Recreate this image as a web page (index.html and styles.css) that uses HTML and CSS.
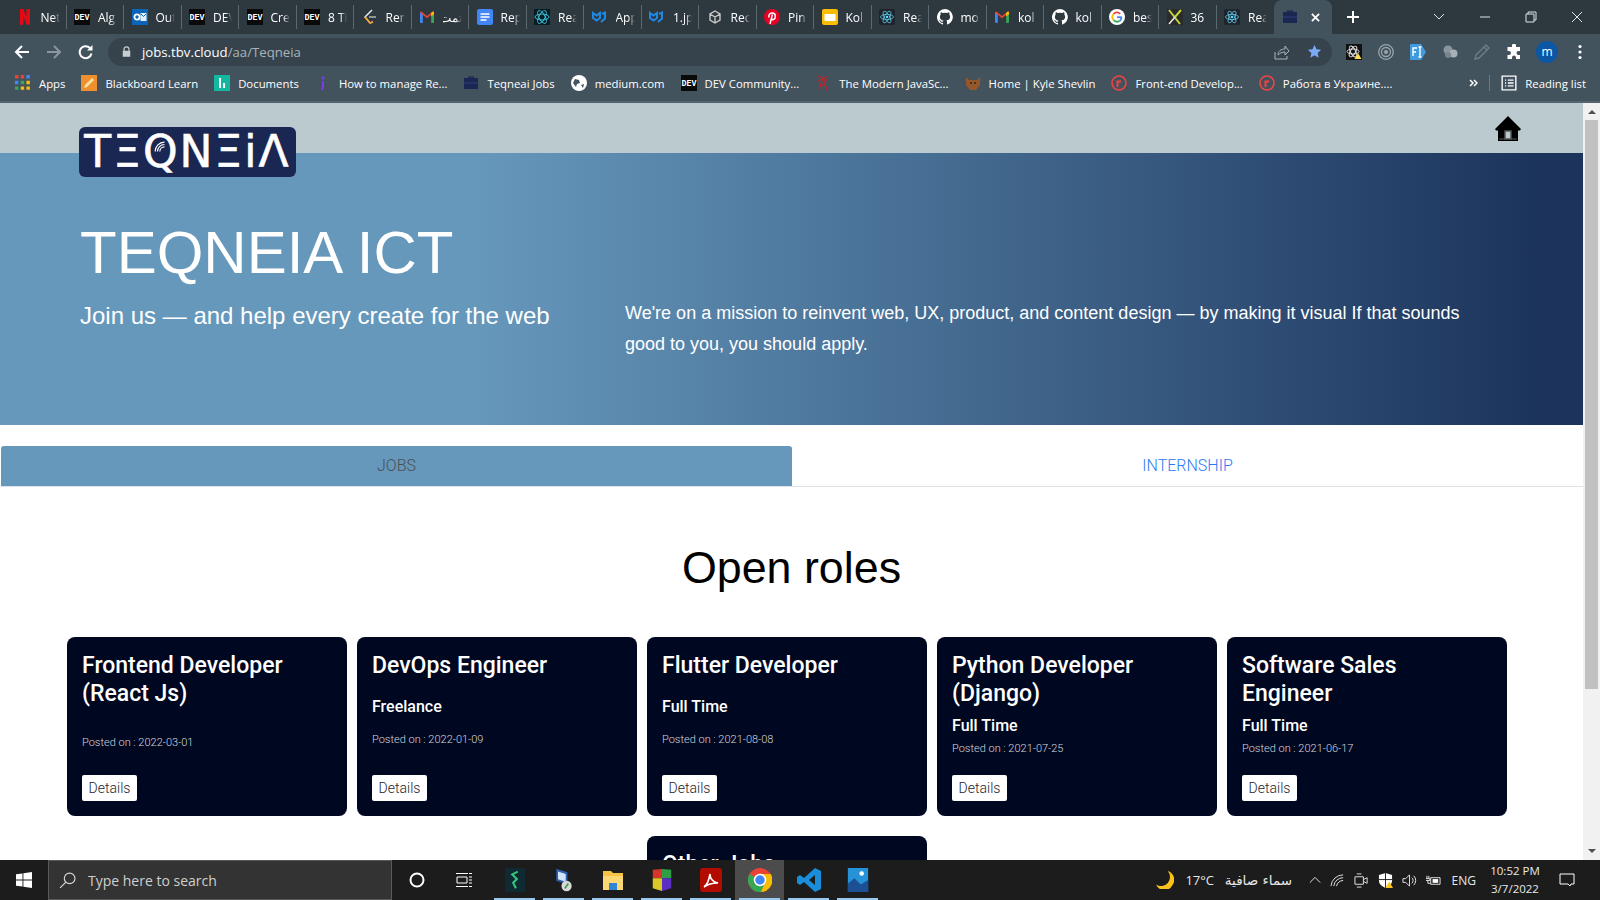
FILE: index.html
```html
<!DOCTYPE html>
<html lang="en">

<head>
    <meta charset="UTF-8">
    <meta name="viewport" content="width=device-width, initial-scale=1.0">
    <title>Teqneia Jobs</title>
    <link rel="stylesheet" href="styles.css">
</head>

<body>
    <!-- icons used more than once -->
    <svg class="sprite" xmlns="http://www.w3.org/2000/svg">
        <symbol id="i-netflix" viewBox="0 0 16 16">
            <path fill="#e50914" d="M3 0h3.400l3 8V0H13v16l-3.400-.5L6.400 7.500V15.500L3 16z" />
        </symbol>
        <symbol id="i-dev" viewBox="0 0 16 16">
            <rect width="16" height="16" fill="#0a0a0a" />
            <text x="8" y="11" text-anchor="middle" class="dev-text">DEV</text>
        </symbol>
        <symbol id="i-outlook" viewBox="0 0 16 16">
            <rect width="16" height="16" fill="#0a64b8" />
            <rect x="8.500" y="4" width="6" height="8" fill="#e6f0fa" />
            <path d="M9 5l2.500 2.500L14 5" fill="none" stroke="#0a64b8" />
            <circle cx="5" cy="8" r="2.600" fill="none" stroke="#fff" stroke-width="1.800" />
        </symbol>
        <symbol id="i-leet" viewBox="0 0 16 16">
            <path d="M10 1L3 8l5 6 3-1" fill="none" stroke="#e8e8e8" stroke-width="1.500" />
            <path d="M3 8l5 6 3-1" fill="none" stroke="#f89f1b" stroke-width="1.500" />
            <path d="M7 8h7" stroke="#b3b3b3" stroke-width="1.500" />
        </symbol>
        <symbol id="i-gmail" viewBox="0 0 16 16">
            <path fill="#4285f4" d="M1 3.500h2.800V14H2a1 1 0 0 1-1-1z" />
            <path fill="#34a853" d="M12.200 3.500H15V13a1 1 0 0 1-1 1h-1.800z" />
            <path fill="#ea4335" d="M1 3.500l1-1.300L8 7l6-4.800 1 1.300-7 5.800z" />
            <path fill="#fbbc04" d="M12.200 4l2-1.800L15 3.500v1.700l-2.800 2.300z" />
        </symbol>
        <symbol id="i-docs" viewBox="0 0 16 16">
            <rect width="16" height="16" rx="2" fill="#4285f4" />
            <path d="M3.500 5h9M3.500 8h9M3.500 11h6" stroke="#fff" stroke-width="1.500" />
        </symbol>
        <symbol id="i-rb" viewBox="0 0 16 16">
            <rect width="16" height="16" fill="#061d24" />
            <g fill="none" stroke="#41c9e2" stroke-width=".9">
                <ellipse cx="8" cy="8" rx="7" ry="3" />
                <ellipse cx="8" cy="8" rx="7" ry="3" transform="rotate(60 8 8)" />
                <ellipse cx="8" cy="8" rx="7" ry="3" transform="rotate(120 8 8)" />
            </g>
        </symbol>
        <symbol id="i-mui" viewBox="0 0 16 16">
            <path d="M1 4l3.500 2.500L8 4v5l-3.500 2.500L1 9zM10 5l3-1.500v6L9 13" fill="none" stroke="#1e88e5"
                stroke-width="2" />
        </symbol>
        <symbol id="i-box" viewBox="0 0 16 16">
            <path d="M8 2l5 3v6l-5 3-5-3V5zM3 5l5 3 5-3M8 8v6" fill="none" stroke="#c9c9c9" stroke-width="1.400" />
        </symbol>
        <symbol id="i-pin" viewBox="0 0 16 16">
            <circle cx="8" cy="8" r="8" fill="#e60023" />
            <path d="M6 15l2.400-9.500M5 8.500C4 5.500 6.500 3.500 9 4c3 .6 3 5.500.5 6.500-1.200.4-2-.5-2-.5" fill="none"
                stroke="#fff" stroke-width="1.500" />
        </symbol>
        <symbol id="i-slides" viewBox="0 0 16 16">
            <rect width="16" height="16" rx="2" fill="#fbbc04" />
            <rect x="2.500" y="5" width="11" height="7" fill="#fff" />
        </symbol>
        <symbol id="i-react" viewBox="0 0 16 16">
            <rect width="16" height="16" rx="2" fill="#20232a" />
            <circle cx="8" cy="8" r="1.300" fill="#61dafb" />
            <g fill="none" stroke="#61dafb" stroke-width=".7">
                <ellipse cx="8" cy="8" rx="6.500" ry="2.600" />
                <ellipse cx="8" cy="8" rx="6.500" ry="2.600" transform="rotate(60 8 8)" />
                <ellipse cx="8" cy="8" rx="6.500" ry="2.600" transform="rotate(120 8 8)" />
            </g>
        </symbol>
        <symbol id="i-github" viewBox="0 0 16 16">
            <path fill="#fff"
                d="M8 0a8 8 0 0 0-2.500 15.600c.4.100.5-.2.500-.4v-1.400c-2.200.5-2.700-1-2.700-1-.4-.9-.9-1.200-.9-1.200-.7-.5.100-.5.100-.5.800.100 1.200.8 1.200.8.700 1.200 1.900.9 2.300.7.100-.5.300-.9.500-1.100-1.800-.2-3.600-.9-3.600-4 0-.9.300-1.600.8-2.100-.1-.2-.4-1 .1-2.100 0 0 .7-.2 2.200.8a7.600 7.600 0 0 1 4 0c1.500-1 2.200-.8 2.200-.8.400 1.100.2 1.900.1 2.100.5.600.8 1.300.8 2.100 0 3.100-1.900 3.700-3.700 3.900.3.300.6.800.6 1.500v2.200c0 .2.100.5.600.4A8 8 0 0 0 8 0z" />
        </symbol>
        <symbol id="i-google" viewBox="0 0 16 16">
            <circle cx="8" cy="8" r="8" fill="#fff" />
            <path d="M12.800 8.200H8" fill="none" stroke="#4285f4" stroke-width="1.800" />
            <path d="M12.500 8.200a4.500 4.500 0 0 1-2 3.700" fill="none" stroke="#4285f4" stroke-width="1.800" />
            <path d="M10.500 11.900a4.500 4.500 0 0 1-5.900-.9" fill="none" stroke="#34a853" stroke-width="1.800" />
            <path d="M4.600 11a4.500 4.500 0 0 1 0-6" fill="none" stroke="#fbbc04" stroke-width="1.800" />
            <path d="M4.600 5a4.500 4.500 0 0 1 6.600-.2" fill="none" stroke="#ea4335" stroke-width="1.800" />
        </symbol>
        <symbol id="i-x" viewBox="0 0 16 16">
            <rect width="16" height="16" fill="#2b2b2b" />
            <path d="M2 1l11 14M14 1L8 8" stroke="#c3d63a" stroke-width="2" fill="none" />
            <path d="M8 8l-6 7" stroke="#eee" stroke-width="1.500" fill="none" />
        </symbol>
        <symbol id="i-case" viewBox="0 0 16 16">
            <path fill="#1b2753" d="M5 3V1.500h6V3h4v11H1V3zM6.200 2.700V3h3.600v-.3z" />
            <path d="M1 8h14" stroke="#2e3f78" />
        </symbol>
        <symbol id="i-ring" viewBox="0 0 16 16">
            <circle cx="8" cy="8" r="7" fill="none" stroke="#ef4444" stroke-width="1.600" />
            <path d="M6.500 12V6.500h3.500" fill="none" stroke="#ef4444" stroke-width="2" />
        </symbol>
    </svg>

    <div class="screen">
        <div class="tabstrip">
            <div class="tab"><svg class="fav"><use href="#i-netflix" /></svg><span class="tab-title">Net</span></div>
            <div class="tab"><svg class="fav"><use href="#i-dev" /></svg><span class="tab-title">Alg</span></div>
            <div class="tab"><svg class="fav"><use href="#i-outlook" /></svg><span class="tab-title">Out</span></div>
            <div class="tab"><svg class="fav"><use href="#i-dev" /></svg><span class="tab-title">DEV</span></div>
            <div class="tab"><svg class="fav"><use href="#i-dev" /></svg><span class="tab-title">Cre</span></div>
            <div class="tab"><svg class="fav"><use href="#i-dev" /></svg><span class="tab-title">8 Ti</span></div>
            <div class="tab"><svg class="fav"><use href="#i-leet" /></svg><span class="tab-title">Ren</span></div>
            <div class="tab"><svg class="fav"><use href="#i-gmail" /></svg><span class="tab-title" dir="rtl">تمت</span></div>
            <div class="tab"><svg class="fav"><use href="#i-docs" /></svg><span class="tab-title">Rep</span></div>
            <div class="tab"><svg class="fav"><use href="#i-rb" /></svg><span class="tab-title">Rea</span></div>
            <div class="tab"><svg class="fav"><use href="#i-mui" /></svg><span class="tab-title">App</span></div>
            <div class="tab"><svg class="fav"><use href="#i-mui" /></svg><span class="tab-title">1.jp</span></div>
            <div class="tab"><svg class="fav"><use href="#i-box" /></svg><span class="tab-title">Rec</span></div>
            <div class="tab"><svg class="fav"><use href="#i-pin" /></svg><span class="tab-title">Pin</span></div>
            <div class="tab"><svg class="fav"><use href="#i-slides" /></svg><span class="tab-title">Kol</span></div>
            <div class="tab"><svg class="fav"><use href="#i-react" /></svg><span class="tab-title">Rea</span></div>
            <div class="tab"><svg class="fav"><use href="#i-github" /></svg><span class="tab-title">mo</span></div>
            <div class="tab"><svg class="fav"><use href="#i-gmail" /></svg><span class="tab-title">kol</span></div>
            <div class="tab"><svg class="fav"><use href="#i-github" /></svg><span class="tab-title">kol</span></div>
            <div class="tab"><svg class="fav"><use href="#i-google" /></svg><span class="tab-title">bes</span></div>
            <div class="tab"><svg class="fav"><use href="#i-x" /></svg><span class="tab-title">36</span></div>
            <div class="tab tab-last"><svg class="fav"><use href="#i-react" /></svg><span class="tab-title">Rea</span></div>
            <div class="tab-active"><svg class="fav"><use href="#i-case" /></svg>
                <svg class="tab-close" viewBox="0 0 10 10"><path d="M1 1l8 8M9 1l-8 8" /></svg>
            </div>
            <svg class="new-tab" viewBox="0 0 12 12"><path d="M6 0v12M0 6h12" /></svg>
            <div class="win-controls">
                <svg class="win-btn" viewBox="0 0 46 30"><path d="M18 12l5 5 5-5" /></svg>
                <svg class="win-btn" viewBox="0 0 46 30"><path d="M18 15h10" /></svg>
                <svg class="win-btn" viewBox="0 0 46 30"><path d="M18 12h8v8h-8zM20 12v-2h8v8h-2" /></svg>
                <svg class="win-btn" viewBox="0 0 46 30"><path d="M18 10l10 10M28 10L18 20" /></svg>
            </div>
        </div>

        <div class="toolbar">
            <svg class="nav-btn" viewBox="0 0 16 16"><path d="M15 8H2M8 2L2 8l6 6" /></svg>
            <svg class="nav-btn nav-off" viewBox="0 0 16 16"><path d="M1 8h13M8 2l6 6-6 6" /></svg>
            <svg class="nav-btn" viewBox="0 0 16 16"><path d="M13.500 9.500A6 6 0 1 1 12 4" /><path class="nav-fill" d="M14.500 1v5.500H9z" /></svg>
            <div class="omnibox">
                <svg class="lock" viewBox="0 0 12 14"><path d="M2 6V4a4 4 0 0 1 8 0v2h1v8H1V6zm1.500 0h5V4a2.500 2.500 0 0 0-5 0z" /></svg>
                <span class="url">jobs.tbv.cloud<span class="url-path">/aa/Teqneia</span></span>
                <svg class="share" viewBox="0 0 16 16"><path d="M1 8v7h12v-3M4 11c0-4 3-6 7-6V2l4 5-4 4V8c-3 0-5 1-7 3z" /></svg>
                <svg class="star" viewBox="0 0 16 16"><path d="M8 1l2.100 4.700 5 .5-3.800 3.400 1.100 5L8 11.900l-4.400 2.700 1.100-5L.9 6.200l5-.5z" /></svg>
            </div>
            <div class="extensions">
                <svg class="ext" viewBox="0 0 16 16"><rect width="16" height="16" fill="#111" /><g fill="none" stroke="#eee" stroke-width=".9"><ellipse cx="7" cy="7.500" rx="6" ry="2.500" /><ellipse cx="7" cy="7.500" rx="6" ry="2.500" transform="rotate(60 7 7.500)" /><ellipse cx="7" cy="7.500" rx="6" ry="2.500" transform="rotate(120 7 7.500)" /></g><path d="M12 9l3.500 6h-7z" fill="#fde047" /></svg>
                <svg class="ext" viewBox="0 0 16 16"><g fill="none" stroke="#9aa5ab"><circle cx="8" cy="8" r="7.300" stroke-width="1.300" /><circle cx="8" cy="8" r="4.500" stroke-width="1.300" /></g><circle cx="8" cy="8" r="2" fill="#9aa5ab" /></svg>
                <svg class="ext" viewBox="0 0 16 16"><path d="M1 0h10l5 8-5 8H1a1 1 0 0 1-1-1V1a1 1 0 0 1 1-1z" fill="#3f9ce0" /><path d="M3 12V4h4M3 8h3M10 3v10M8.500 3h3M8.500 13h3" stroke="#fff" stroke-width="1.400" fill="none" /></svg>
                <svg class="ext" viewBox="0 0 16 16"><circle cx="6" cy="6" r="4.500" fill="#8b979e" /><circle cx="11.500" cy="9.500" r="4" fill="#a7b0b6" /><circle cx="6" cy="11" r="3" fill="#79858c" /></svg>
                <svg class="ext" viewBox="0 0 16 16"><path d="M12 1l3 3L5 14l-4 1 1-4z" fill="none" stroke="#6f7c84" stroke-width="1.400" /><path d="M10 3l3 3" stroke="#6f7c84" stroke-width="1.400" /></svg>
                <svg class="ext" viewBox="0 0 16 16"><path fill="#fff" d="M6 1.500a2 2 0 0 1 4 0V3h4v4h-1.500a2 2 0 0 0 0 4H14v4H10v-1.500a2 2 0 0 0-4 0V15H1.500v-4H3a2 2 0 0 0 0-4H1.500V3H6z" /></svg>
                <span class="avatar">m</span>
                <svg class="kebab" viewBox="0 0 4 16"><circle cx="2" cy="2.500" r="1.600" /><circle cx="2" cy="8" r="1.600" /><circle cx="2" cy="13.500" r="1.600" /></svg>
            </div>
        </div>

        <div class="bookmarks">
            <div class="bm"><svg class="bm-icon" viewBox="0 0 14 14"><path fill="#ea4335" d="M0 0h3v3H0zM5 0h3v3H5z" /><path fill="#4285f4" d="M10 0h3v3h-3zM0 5h3v3H0z" /><path fill="#34a853" d="M5 5h3v3H5zM0 10h3v3H0z" /><path fill="#fbbc04" d="M10 5h3v3h-3zM5 10h3v3H5zM10 10h3v3h-3z" /></svg>Apps</div>
            <div class="bm"><svg class="bm-icon" viewBox="0 0 16 16"><rect width="16" height="16" fill="#ef8f2e" /><path d="M3 13l1-3 7-7 2 2-7 7z" fill="#f7e3a1" /></svg>Blackboard Learn</div>
            <div class="bm"><svg class="bm-icon" viewBox="0 0 16 16"><rect width="16" height="16" fill="#12b8a0" /><path d="M5 3h2v10H5zM9 8h2v5H9z" fill="#fff" /></svg>Documents</div>
            <div class="bm"><svg class="bm-icon" viewBox="0 0 16 16"><circle cx="8" cy="3" r="1.500" fill="#7c3aed" /><path d="M8 6v6l-1 3" stroke="#7c3aed" stroke-width="2" fill="none" /></svg>How to manage Re...</div>
            <div class="bm"><svg class="bm-icon"><use href="#i-case" /></svg>Teqneai Jobs</div>
            <div class="bm"><svg class="bm-icon" viewBox="0 0 16 16"><circle cx="8" cy="8" r="8" fill="#fff" /><path d="M4 4l4 1 1 3-3 1-1 3-3-4zM10 10l3-1-1 4z" fill="#44545f" /></svg>medium.com</div>
            <div class="bm"><svg class="bm-icon"><use href="#i-dev" /></svg>DEV Community...</div>
            <div class="bm"><svg class="bm-icon" viewBox="0 0 16 16"><path d="M8 3L4 15M8 3l4 12M5 10h6M3 1l10 5M13 1L3 6" stroke="#b5282e" stroke-width="1.300" fill="none" /></svg>The Modern JavaSc...</div>
            <div class="bm"><svg class="bm-icon" viewBox="0 0 16 16"><path d="M1 2l3 3h8l3-3v8l-4 5H5l-4-5z" fill="#94582a" /><circle cx="6" cy="8" r="1" fill="#3a2212" /><circle cx="10" cy="8" r="1" fill="#3a2212" /></svg>Home | Kyle Shevlin</div>
            <div class="bm"><svg class="bm-icon"><use href="#i-ring" /></svg>Front-end Develop...</div>
            <div class="bm"><svg class="bm-icon"><use href="#i-ring" /></svg>Работа в Украине....</div>
            <div class="bm-end">
                <svg class="bm-more" viewBox="0 0 9 8"><path d="M1 1l3 3-3 3M5 1l3 3-3 3" /></svg>
                <span class="bm-sep"></span>
                <div class="bm"><svg class="bm-icon" viewBox="0 0 14 14"><path d="M1 1h12v12H1zM3.500 4.500h1M6 4.500h5M3.500 7h1M6 7h5M3.500 9.500h1M6 9.500h5" fill="none" stroke="#fff" stroke-width="1.200" /></svg>Reading list</div>
            </div>
        </div>

        <div class="viewport">
            <main class="page">
                <header class="top-strip">
                    <div class="logo">
                        <span class="logo-text">TΞQNΞiΛ</span>
                        <svg class="logo-waves" viewBox="0 0 12 12"><path d="M1 9a8 8 0 0 1 8-8M3 9a6 6 0 0 1 6-6M5 9a4 4 0 0 1 4-4" /></svg>
                    </div>
                    <svg class="home" viewBox="0 0 26 25"><path d="M13 0l13 13-1 1.500h-2V25H3V14.500H1L0 13z" /><rect class="home-door" x="10" y="15" width="6" height="8" /><path class="home-base" d="M4 23h6M16 23h6" /></svg>
                </header>

                <section class="hero">
                    <h1 class="hero-title">TEQNEIA ICT</h1>
                    <div class="hero-row">
                        <h2 class="hero-sub">Join us — and help every create for the web</h2>
                        <p class="hero-text">We're on a mission to reinvent web, UX, product, and content design — by making it visual If that sounds good to you, you should apply.</p>
                    </div>
                </section>

                <nav class="job-tabs">
                    <a class="job-tab job-tab-on">JOBS</a>
                    <a class="job-tab">INTERNSHIP</a>
                </nav>

                <h2 class="roles-title">Open roles</h2>

                <div class="roles">
                    <article class="card">
                        <h3 class="card-title">Frontend Developer (React Js)</h3>
                        <div class="card-type"></div>
                        <div class="card-date">Posted on : 2022-03-01</div>
                        <button class="card-btn">Details</button>
                    </article>
                    <article class="card">
                        <h3 class="card-title">DevOps Engineer</h3>
                        <div class="card-type">Freelance</div>
                        <div class="card-date">Posted on : 2022-01-09</div>
                        <button class="card-btn">Details</button>
                    </article>
                    <article class="card">
                        <h3 class="card-title">Flutter Developer</h3>
                        <div class="card-type">Full Time</div>
                        <div class="card-date">Posted on : 2021-08-08</div>
                        <button class="card-btn">Details</button>
                    </article>
                    <article class="card">
                        <h3 class="card-title">Python Developer (Django)</h3>
                        <div class="card-type">Full Time</div>
                        <div class="card-date">Posted on : 2021-07-25</div>
                        <button class="card-btn">Details</button>
                    </article>
                    <article class="card">
                        <h3 class="card-title">Software Sales Engineer</h3>
                        <div class="card-type">Full Time</div>
                        <div class="card-date">Posted on : 2021-06-17</div>
                        <button class="card-btn">Details</button>
                    </article>
                    <article class="card">
                        <h3 class="card-title">Other Jobs</h3>
                        <div class="card-type"></div>
                        <div class="card-date"></div>
                        <button class="card-btn">Details</button>
                    </article>
                </div>
            </main>

            <div class="scrollbar">
                <span class="sb-up"></span>
                <span class="sb-thumb"></span>
                <span class="sb-down"></span>
            </div>
        </div>

        <footer class="taskbar">
            <svg class="win-logo" viewBox="0 0 16 16"><path d="M0 2.300l6.500-.9v6.200H0zM7.400 1.300L16 0v7.600H7.400zM0 8.400h6.500v6.200L0 13.700zM7.400 8.400H16V16l-8.600-1.200z" /></svg>
            <div class="search">
                <svg class="search-icon" viewBox="0 0 16 16"><circle cx="10" cy="6" r="5" /><path d="M6.500 9.500L1 15" /></svg>
                <span>Type here to search</span>
            </div>
            <div class="task-icons">
                <div class="task"><svg class="cortana" viewBox="0 0 16 16"><circle cx="8" cy="8" r="6.500" /></svg></div>
                <div class="task"><svg class="taskview" viewBox="0 0 16 16"><path d="M0 1.500h12M13 1.500h3M0 14.500h12M13 14.500h3M1 5h10v6H1zM13 5h3M13 8h3M13 11h3" /></svg></div>
                <div class="task task-open"><svg class="app" viewBox="0 0 22 26"><rect width="22" height="26" fill="#102a33" /><path d="M14 4L8 7l5 5-4 4 3 6" fill="none" stroke="#36c77f" stroke-width="2.200" /></svg></div>
                <div class="task task-open"><svg class="app" viewBox="0 0 24 28"><path d="M3 1l13 4v14L3 15z" fill="#2f5fb0" /><path d="M5 4l9 3v9L5 13z" fill="#cfe3fb" /><circle cx="15" cy="21" r="6" fill="#d9d9d9" /><path d="M13 24l4-6" stroke="#3ca04b" stroke-width="2" /></svg></div>
                <div class="task task-open"><svg class="app" viewBox="0 0 24 24"><path d="M2 3h8l2 2h10v17H2z" fill="#f6c343" /><path d="M2 8h20v14H2z" fill="#fcd875" /><path d="M8 15h8v7H8z" fill="#2f86d6" /></svg></div>
                <div class="task task-open"><svg class="app" viewBox="0 0 22 26"><path d="M1 2l10-1v10H1z" fill="#d6342c" /><path d="M11 1l10 1v9H11z" fill="#2f9e44" /><path d="M1 11h10v14L1 22z" fill="#d8c927" /><path d="M11 11h10v11l-10 3z" fill="#5b2fc4" /></svg></div>
                <div class="task task-open"><svg class="app" viewBox="0 0 24 24"><rect width="22" height="24" x="1" rx="3" fill="#b30b00" /><path d="M5 19c3-2 5-7 6-13 0 5 3 8 8 9-5 0-10 1-14 4z" fill="none" stroke="#fff" stroke-width="1.600" /></svg></div>
                <div class="task task-open task-now"><svg class="app" viewBox="0 0 24 24"><circle cx="12" cy="12" r="12" fill="#ea4335" /><path d="M12 6h10.800A12 12 0 0 1 13 24z" fill="#fbbc04" /><path d="M12 12L1.600 18A12 12 0 0 0 13 24l5-12z" fill="#34a853" /><path d="M12 12L1.600 18A12 12 0 0 1 1.600 6z" fill="#34a853" /><circle cx="12" cy="12" r="5.500" fill="#4285f4" stroke="#fff" stroke-width="1.500" /></svg></div>
                <div class="task task-open"><svg class="app" viewBox="0 0 24 24"><path d="M18 0l6 3v18l-6 3-11-10-4 3-3-2V9l3-2 4 3zM18 7l-6 5 6 5z" fill="#1a8ddb" /></svg></div>
                <div class="task task-open"><svg class="app" viewBox="0 0 22 26"><rect width="22" height="26" fill="#2693d9" /><path d="M0 26V17l7-6 7 7 8-5v13z" fill="#1d4f95" /><circle cx="15" cy="6" r="2.500" fill="#fff" /></svg></div>
            </div>
            <div class="tray">
                <svg class="moon" viewBox="0 0 20 20"><path d="M13 0a10 10 0 0 1-13 15 10 10 0 0 0 18 1A10 10 0 0 0 13 0z" fill="#fcc21b" /></svg>
                <span class="temp">17°C</span>
                <span class="weather" dir="rtl" lang="ar">سماء صافية</span>
                <svg class="chev" viewBox="0 0 14 8"><path d="M1 7l6-6 6 6" /></svg>
                <svg class="tray-icon" viewBox="0 0 16 16"><path d="M1 14a13 13 0 0 1 13-12M4 14a10 10 0 0 1 10-9M7 14a7 7 0 0 1 7-6" /></svg>
                <svg class="tray-icon" viewBox="0 0 16 16"><path d="M1 4h9v8H1zM10 7l4-2v6l-4-2M3 1h5M3 15h5" /></svg>
                <svg class="tray-icon" viewBox="0 0 16 16"><path class="tray-fill" d="M8 0l7 2v6c0 4-3 6-7 8-4-2-7-4-7-8V2z" /><path d="M8 0v16M1 7h14" class="tray-cut" /><path d="M12 9l4 7H8z" fill="#fcc21b" stroke="none" /></svg>
                <svg class="tray-icon" viewBox="0 0 16 16"><path d="M1 6h3l4-4v12l-4-4H1zM10.500 5a4 4 0 0 1 0 6M12.500 3a7 7 0 0 1 0 10" /></svg>
                <svg class="tray-icon" viewBox="0 0 16 16"><path d="M5 5h10v7H5zM1 3v3M3 3v3M0 6h4v2H0M2 8v3h3" /><rect class="tray-fill" x="7" y="6.500" width="6" height="4" /></svg>
                <span class="lang">ENG</span>
                <div class="clock"><span>10:52 PM</span><span>3/7/2022</span></div>
                <svg class="notify" viewBox="0 0 16 16"><path d="M1 2h14v10h-3l-1 2-2-2H1z" /></svg>
            </div>
        </footer>
    </div>
</body>

</html>
```

FILE: styles.css
```css
* {
    box-sizing: border-box;
}

html,
body {
    margin: 0;
    height: 100%;
    overflow: hidden;
}

.sprite {
    display: none;
}

.dev-text {
    font-family: "Liberation Mono", monospace;
    font-weight: bold;
    font-size: 8.300px;
    fill: #fff;
}

.screen {
    display: flex;
    flex-direction: column;
    width: 1600px;
    height: 900px;
    overflow: hidden;
    font-family: "Open Sans", sans-serif;
}

/* browser tabs */
.tabstrip {
    display: flex;
    align-items: center;
    flex: none;
    height: 34px;
    padding-left: 9px;
    background-color: #2e393f;
    color: #fff;
}

.tab {
    display: flex;
    align-items: center;
    flex: none;
    gap: 8px;
    width: 57.500px;
    height: 24px;
    padding-left: 7.500px;
    border-right: 1px solid #5d686e;
    font-size: 12px;
}

.tab-last {
    border-right: 0;
}

.tab-title {
    width: 19px;
    white-space: nowrap;
    -webkit-mask-image: linear-gradient(to right, #000 65%, transparent);
}

.fav {
    flex: none;
    width: 16px;
    height: 16px;
}

.tab-active {
    display: flex;
    align-items: center;
    flex: none;
    width: 58px;
    height: 34px;
    padding-left: 8px;
    border-radius: 8px 8px 0 0;
    background-color: #43535e;
}

.tab-close {
    width: 9px;
    height: 9px;
    margin-left: 13px;
    fill: none;
    stroke: #fff;
    stroke-width: 2;
}

.new-tab {
    width: 12px;
    height: 12px;
    margin-left: 15px;
    fill: none;
    stroke: #fff;
    stroke-width: 2;
}

.win-controls {
    display: flex;
    margin-left: auto;
    margin-right: 0;
}

.win-btn {
    width: 46px;
    height: 30px;
    fill: none;
    stroke: #dfe3e5;
    stroke-width: 1;
}

/* address bar */
.toolbar {
    display: flex;
    align-items: center;
    flex: none;
    height: 35px;
    padding-left: 14px;
    background-color: #43535e;
}

.nav-btn {
    width: 16px;
    height: 16px;
    margin-right: 16px;
    fill: none;
    stroke: #fff;
    stroke-width: 2;
}

.nav-off {
    stroke: #8b979e;
}

.nav-fill {
    fill: #fff;
    stroke: none;
}

.omnibox {
    display: flex;
    align-items: center;
    width: 1224px;
    height: 28px;
    margin-left: -2px;
    padding-left: 14px;
    padding-right: 10px;
    border-radius: 14px;
    background-color: #36434c;
}

.lock {
    width: 9px;
    height: 11px;
    fill: #c8ced2;
}

.url {
    margin-left: 11px;
    color: #fff;
    font-size: 13.200px;
    white-space: nowrap;
}

.url-path {
    color: #a9b3b9;
}

.share {
    width: 16px;
    height: 16px;
    margin-left: auto;
    fill: none;
    stroke: #a9b3b9;
}

.star {
    width: 15px;
    height: 15px;
    margin-left: 17px;
    fill: #7baaf7;
}

.extensions {
    display: flex;
    align-items: center;
    margin-left: 14px;
}

.ext {
    width: 16px;
    height: 16px;
    margin-right: 16.100px;
}

.avatar {
    width: 22px;
    height: 22px;
    margin-left: -2.600px;
    border-radius: 50%;
    background-color: #0b57a4;
    color: #fff;
    font-size: 12px;
    line-height: 21px;
    text-align: center;
}

.kebab {
    width: 4px;
    height: 16px;
    margin-left: 20px;
    fill: #fff;
}

/* bookmarks */
.bookmarks {
    display: flex;
    align-items: center;
    flex: none;
    gap: 16px;
    height: 34px;
    padding-left: 15px;
    padding-bottom: 4px;
    border-bottom: 2px solid #55646e;
    background-color: #43535e;
    color: #fff;
    font-size: 11.350px;
    white-space: nowrap;
}

.bm {
    display: flex;
    align-items: center;
    gap: 8px;
}

.bm-icon {
    flex: none;
    width: 16px;
    height: 16px;
}

.bm-end {
    display: flex;
    align-items: center;
    margin-left: auto;
    padding-right: 14px;
}

.bm-more {
    width: 9px;
    height: 8px;
    fill: none;
    stroke: #fff;
    stroke-width: 1.500;
}

.bm-sep {
    width: 1px;
    height: 16px;
    margin: 0 11px;
    background-color: #6d7a83;
}

/* page */
.viewport {
    display: flex;
    flex: 1;
    min-height: 0;
}

.page {
    flex: 1;
    min-width: 0;
    overflow: hidden;
    background-color: #fff;
    font-family: "Liberation Sans", Arial, sans-serif;
}

.top-strip {
    display: flex;
    justify-content: space-between;
    height: 50px;
    padding: 0 62px 0 79px;
    background-color: #bbcace;
}

.logo {
    position: relative;
    flex: none;
    width: 217px;
    height: 50px;
    margin-top: 24px;
    border-radius: 6px;
    background-color: #1b2753;
    color: #fff;
    font-family: "DejaVu Sans", sans-serif;
    text-align: center;
    z-index: 1;
}

.logo-text {
    font-size: 44px;
    line-height: 50px;
    letter-spacing: 2px;
    white-space: nowrap;
    -webkit-text-stroke: .6px #fff;
}

.logo-waves {
    position: absolute;
    left: 75px;
    top: 14px;
    width: 14px;
    height: 14px;
    fill: none;
    stroke: #fff;
}

.home {
    width: 26px;
    height: 25px;
    margin-top: 13px;
}

.home-door {
    fill: #bbcace;
    stroke: #555;
    stroke-width: 1.500;
}

.home-base {
    fill: none;
    stroke: #555;
}

.hero {
    height: 272px;
    padding: 64px 0 0 80px;
    background: linear-gradient(to right, #6698bc 30%, #1c345c 97%);
    color: #fff;
}

.hero-title {
    margin: 0;
    font-size: 60px;
    font-weight: normal;
    line-height: 72px;
}

.hero-row {
    display: flex;
    margin-top: 8px;
}

.hero-sub {
    flex: none;
    width: 545px;
    margin: 0;
    font-size: 24px;
    font-weight: normal;
    line-height: 38px;
}

.hero-text {
    width: 850px;
    margin: 1px 0 0;
    font-size: 18px;
    line-height: 31px;
}

.job-tabs {
    display: flex;
    height: 41px;
    margin-top: 21px;
    padding-left: 1px;
    border-bottom: 1px solid #dee2e6;
    font-family: Roboto, sans-serif;
    font-size: 16px;
    font-weight: 300;
}

.job-tab {
    flex: 1;
    color: #2b7bf2;
    line-height: 39px;
    text-align: center;
}

.job-tab-on {
    border-radius: 3px 3px 0 0;
    background-color: #6698bc;
    color: #495057;
}

.roles-title {
    margin: 53px 0 43px;
    font-size: 44.800px;
    font-weight: normal;
    line-height: 54px;
    text-align: center;
}

.roles {
    display: flex;
    flex-wrap: wrap;
    justify-content: center;
    gap: 20px 10px;
    width: 1440px;
    margin-left: 67px;
}

.card {
    display: flex;
    flex-direction: column;
    width: 280px;
    height: 179px;
    padding: 15px;
    border-radius: 8px;
    background-color: #000721;
    color: #fff;
    font-family: Roboto, sans-serif;
}

.card-title {
    margin: 0;
    font-size: 23px;
    font-weight: 500;
    line-height: 28px;
}

/* the three autos share the free space, as in the real page */
.card-type {
    margin-top: auto;
    font-size: 16px;
    font-weight: 500;
    line-height: 19px;
}

.card-date {
    margin: auto 0;
    color: #d6d8de;
    font-size: 11px;
    font-weight: 300;
    line-height: 14px;
}

.card-btn {
    flex: none;
    align-self: flex-start;
    width: 55px;
    height: 26px;
    margin-top: 11px;
    padding: 0;
    border: 0;
    border-radius: 2px;
    background-color: #fff;
    color: #212529;
    font-family: Roboto, sans-serif;
    font-size: 14px;
    font-weight: 300;
}

.scrollbar {
    display: flex;
    flex-direction: column;
    align-items: center;
    flex: none;
    width: 17px;
    background-color: #f1f1f1;
}

.sb-up {
    margin-top: 7px;
    border: 4px solid transparent;
    border-top: 0;
    border-bottom: 4px solid #505050;
}

.sb-thumb {
    width: 13px;
    height: 569px;
    margin-top: 6px;
    background-color: #c1c1c1;
}

.sb-down {
    margin-top: auto;
    margin-bottom: 7px;
    border: 4px solid transparent;
    border-bottom: 0;
    border-top: 4px solid #505050;
}

/* windows taskbar */
.taskbar {
    display: flex;
    align-items: center;
    flex: none;
    height: 40px;
    background-color: #1c1c1c;
    color: #fff;
    font-family: "Open Sans", sans-serif;
}

.win-logo {
    width: 16px;
    height: 16px;
    margin: 0 16px;
    fill: #fff;
}

.search {
    display: flex;
    align-items: center;
    gap: 12px;
    width: 344px;
    height: 40px;
    padding-left: 10px;
    border: 1px solid #5a5a5a;
    background-color: #333;
    color: #cfcfcf;
    font-size: 14px;
}

.search-icon {
    width: 17px;
    height: 17px;
    fill: none;
    stroke: #d8d8d8;
    stroke-width: 1.100;
}

.task-icons {
    display: flex;
}

.task {
    display: flex;
    align-items: center;
    justify-content: center;
    position: relative;
    width: 49px;
    height: 40px;
}

.task-open::after {
    content: "";
    position: absolute;
    left: 4px;
    right: 4px;
    bottom: 0;
    height: 2px;
    background-color: #99c9ef;
}

.task-now {
    background-color: #4c4c4c;
}

.cortana {
    width: 16px;
    height: 16px;
    fill: none;
    stroke: #fff;
    stroke-width: 2;
}

.taskview {
    width: 16px;
    height: 16px;
    margin-right: 3px;
    fill: none;
    stroke: #fff;
}

.app {
    width: 24px;
    height: 24px;
}

.tray {
    display: flex;
    align-items: center;
    margin-left: auto;
    margin-right: 25px;
    font-size: 13px;
    color: #e8e8e8;
}

.moon {
    width: 18px;
    height: 18px;
}

.temp {
    margin-left: 11px;
}

.weather {
    width: 68px;
    margin-left: 10px;
    font-family: "DejaVu Sans", sans-serif;
    font-size: 13.500px;
    white-space: nowrap;
}

.chev {
    width: 12px;
    height: 8px;
    margin-left: 17px;
    fill: none;
    stroke: #fff;
}

.tray-icon {
    width: 15px;
    height: 15px;
    margin-left: 9px;
    fill: none;
    stroke: #e8e8e8;
}

.tray-fill {
    fill: #fff;
    stroke: none;
}

.tray-cut {
    stroke: #1c1c1c;
}

.lang {
    margin-left: 10.500px;
    font-size: 12px;
}

.clock {
    display: flex;
    flex-direction: column;
    align-items: center;
    width: 62px;
    margin-left: 8px;
    font-size: 11.500px;
    line-height: 18px;
}

.notify {
    width: 16px;
    height: 16px;
    margin-left: 13px;
    fill: none;
    stroke: #fff;
}
```
